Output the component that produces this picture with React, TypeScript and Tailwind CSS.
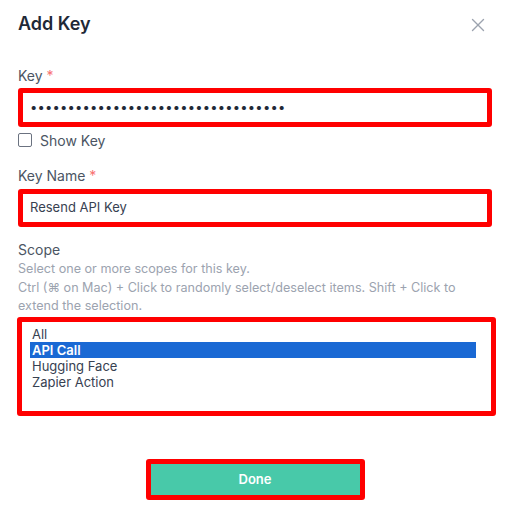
import { X } from 'lucide-react';

const scopes = ['All', 'API Call', 'Hugging Face', 'Zapier Action'];

export default function App() {
  return (
    <div className="w-[510px] h-[514px] bg-white px-[18px] font-['Inter',sans-serif] text-[#374151]">
      {/* Header */}
      <div className="flex items-center justify-between pt-[10px] h-[38px]">
        <h2 className="text-[18px] leading-[28px] font-semibold text-[#1f2937]">Add Key</h2>
        <X size={22} strokeWidth={1.5} className="text-[#9ca3af] mr-[3px] mt-[2px]" />
      </div>

      {/* Key */}
      <label className="block mt-[28px] text-[14px] leading-[20px] text-[#4b5563]">
        Key <span className="text-[#f87171]">*</span>
      </label>
      <div className="mt-[2px] h-[39px] border-[5px] border-[#ff0000] rounded-[3px] flex items-center pl-[7px]">
        <input
          type="password"
          readOnly
          value="abcdefghijklmnopqrstuvwxyz01234567"
          className="w-full outline-none text-[13px] text-[#1f2937] tracking-[0.2px] bg-transparent"
        />
      </div>
      <div className="mt-[3px] flex items-center gap-2 h-[20px]">
        <span className="w-[14px] h-[14px] border border-[#6b7280] rounded-[2px]" />
        <span className="text-[14px] text-[#4b5563]">Show Key</span>
      </div>

      {/* Key Name */}
      <label className="block mt-[16px] text-[14px] leading-[20px] text-[#4b5563]">
        Key Name <span className="text-[#f87171]">*</span>
      </label>
      <div className="mt-[3px] h-[38px] border-[5px] border-[#ff0000] rounded-[3px] flex items-center pl-[7px]">
        <span className="text-[13px] text-[#374151]">Resend API Key</span>
      </div>

      {/* Scope */}
      <label className="block mt-[13px] text-[14px] leading-[20px] text-[#4b5563]">Scope</label>
      <p className="text-[12.6px] leading-[18.5px] text-[#9ca3af]">
        Select one or more scopes for this key.
        <br />
        Ctrl (⌘ on Mac) + Click to randomly select/deselect items. Shift + Click to extend the selection.
      </p>
      <div className="mt-[1.5px] ml-[-1px] w-[479px] h-[99px] border-[5px] border-[#ff0000] rounded-[3px] pt-[4px] pl-[8px] pr-[15px]">
        {scopes.map((s) => (
          <div
            key={s}
            className={`h-[16px] leading-[16px] text-[13px] pl-[2px] ${
              s === 'API Call' ? 'bg-[#1a69d4] text-white font-semibold' : 'text-[#374151]'
            }`}
          >
            {s}
          </div>
        ))}
      </div>

      {/* Footer */}
      <div className="flex justify-center mt-[43px]">
        <button className="w-[219px] h-[41px] border-[5px] border-[#ff0000] rounded-[3px] bg-[#48c9a9] text-white text-[13px] font-semibold">
          Done
        </button>
      </div>
    </div>
  );
}
